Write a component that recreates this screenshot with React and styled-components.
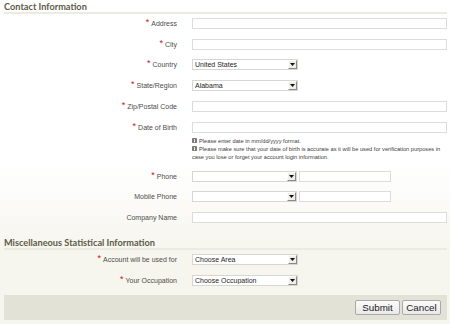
import React from "react";
import styled, { createGlobalStyle } from "styled-components";

const GlobalStyle = createGlobalStyle`
  html, body {
    margin: 0;
    padding: 0;
    background: #fff;
  }
  body {
    font-family: "Liberation Sans", Arial, sans-serif;
  }
`;

/* page with the faint beige fade toward the bottom */
const Page = styled.div`
  width: 450px;
  height: 324px;
  box-sizing: border-box;
  padding: 0 3px 0 4px;
  background: linear-gradient(#ffffff 0, #ffffff 165px, #f6f5ee 250px, #f6f5ee 100%);
  overflow: hidden;
`;

const SectionHeader = styled.h2`
  margin: ${(p) => (p.$first ? "0 0 -1px" : "8px 0 -1px")};
  height: 11px;
  padding: 1px 0 0;
  font-family: "Lato", "Open Sans", sans-serif;
  font-weight: 700;
  font-size: 9.2px;
  line-height: 11px;
  color: #5c5a47;
  border-bottom: 2px solid #ebeae3;
`;

const Row = styled.div`
  display: grid;
  grid-template-columns: 173px 255px;
  column-gap: 15px;
  align-items: center;
  height: 20.8px;
  margin-top: ${(p) => p.$gap || 0}px;
`;

const Label = styled.label`
  text-align: right;
  font-size: 7px;
  line-height: 9px;
  color: #4d4d4d;
  white-space: nowrap;
`;

const Star = styled.span`
  color: #c81010;
  font-size: 9px;
  line-height: 9px;
  position: relative;
  top: -1px;
  margin-right: 2px;
`;

const Field = styled.div`
  display: flex;
  align-items: center;
  gap: 2px;
`;

const TextInput = styled.input`
  box-sizing: border-box;
  height: 11px;
  width: ${(p) => p.$w || "100%"};
  margin: 0;
  padding: 0 2px;
  border: 1px solid #dcdcd8;
  background: #fff;
  font-size: 7px;
`;

const SelectBox = styled.div`
  box-sizing: border-box;
  height: 11px;
  width: ${(p) => p.$w || 106}px;
  display: flex;
  align-items: center;
  border: 1px solid #d6d6d2;
  background: #fff;
  font-size: 7px;
  color: #1e1e1e;
`;

const SelectText = styled.span`
  flex: 1;
  padding-left: 2px;
  white-space: nowrap;
  overflow: hidden;
`;

const SelectArrow = styled.span`
  box-sizing: border-box;
  width: 9px;
  height: 9px;
  display: flex;
  align-items: center;
  justify-content: center;
  background: #efeeea;
  border-top: 1px solid #fcfcfc;
  border-left: 1px solid #fcfcfc;
  border-right: 1px solid #8a8a8a;
  border-bottom: 1px solid #8a8a8a;
`;

const Hints = styled.div`
  margin: -1px 0 0 188px;
  width: 255px;
  font-size: 5.7px;
  line-height: 8px;
  color: #3c3c3c;
`;

const Hint = styled.div`
  display: block;
`;

const InfoIcon = styled.svg`
  width: 5px;
  height: 5px;
  vertical-align: -0.5px;
  margin-right: 2px;
`;

const Footer = styled.div`
  margin-top: 4.5px;
  height: 25px;
  box-sizing: border-box;
  display: flex;
  align-items: center;
  justify-content: flex-end;
  gap: 2px;
  padding-right: 6px;
  background: #e3e2d6;
`;

const Button = styled.button`
  box-sizing: border-box;
  height: 15px;
  padding: 0 3px;
  width: ${(p) => p.$w}px;
  font-family: "Liberation Sans", Arial, sans-serif;
  font-size: 9.8px;
  color: #1a1a1a;
  background: linear-gradient(#fbfbfb, #e9e9e9);
  border: 1px solid #a9a9a9;
  border-radius: 2px;
`;

const Arrow = () => (
  <svg width="5" height="3" viewBox="0 0 5 3">
    <path d="M0 0H5L2.5 3Z" fill="#111" />
  </svg>
);

const Select = ({ value, w }) => (
  <SelectBox $w={w}>
    <SelectText>{value}</SelectText>
    <SelectArrow>
      <Arrow />
    </SelectArrow>
  </SelectBox>
);

const Info = () => (
  <InfoIcon viewBox="0 0 5 5">
    <rect x="0" y="0" width="5" height="5" rx="0.8" fill="#7a7a7a" />
    <rect x="2" y="1" width="1" height="0.8" fill="#fff" />
    <rect x="2" y="2.2" width="1" height="2" fill="#fff" />
  </InfoIcon>
);

const FormRow = ({ label, required, children, gap }) => (
  <Row $gap={gap}>
    <Label>
      {required && <Star>*</Star>}
      {label}
    </Label>
    <Field>{children}</Field>
  </Row>
);

export default function App() {
  return (
    <>
      <GlobalStyle />
      <Page>
        <SectionHeader $first>Contact Information</SectionHeader>
        <FormRow label="Address" required>
          <TextInput />
        </FormRow>
        <FormRow label="City" required>
          <TextInput />
        </FormRow>
        <FormRow label="Country" required>
          <Select value="United States" />
        </FormRow>
        <FormRow label="State/Region" required>
          <Select value="Alabama" />
        </FormRow>
        <FormRow label="Zip/Postal Code" required>
          <TextInput />
        </FormRow>
        <FormRow label="Date of Birth" required>
          <TextInput />
        </FormRow>
        <Hints>
          <Hint>
            <Info />
            Please enter date in mm/dd/yyyy format.
          </Hint>
          <Hint>
            <Info />
            Please make sure that your date of birth is accurate as it will be used for
            verification purposes in case you lose or forget your account login information.
          </Hint>
        </Hints>
        <FormRow label="Phone" required gap={5}>
          <Select value="" w={105} />
          <TextInput $w="92px" />
        </FormRow>
        <FormRow label="Mobile Phone">
          <Select value="" w={105} />
          <TextInput $w="92px" />
        </FormRow>
        <FormRow label="Company Name">
          <TextInput />
        </FormRow>

        <SectionHeader>Miscellaneous Statistical Information</SectionHeader>
        <FormRow label="Account will be used for" required>
          <Select value="Choose Area" />
        </FormRow>
        <FormRow label="Your Occupation" required>
          <Select value="Choose Occupation" />
        </FormRow>

        <Footer>
          <Button $w={45}>Submit</Button>
          <Button $w={39}>Cancel</Button>
        </Footer>
      </Page>
    </>
  );
}
